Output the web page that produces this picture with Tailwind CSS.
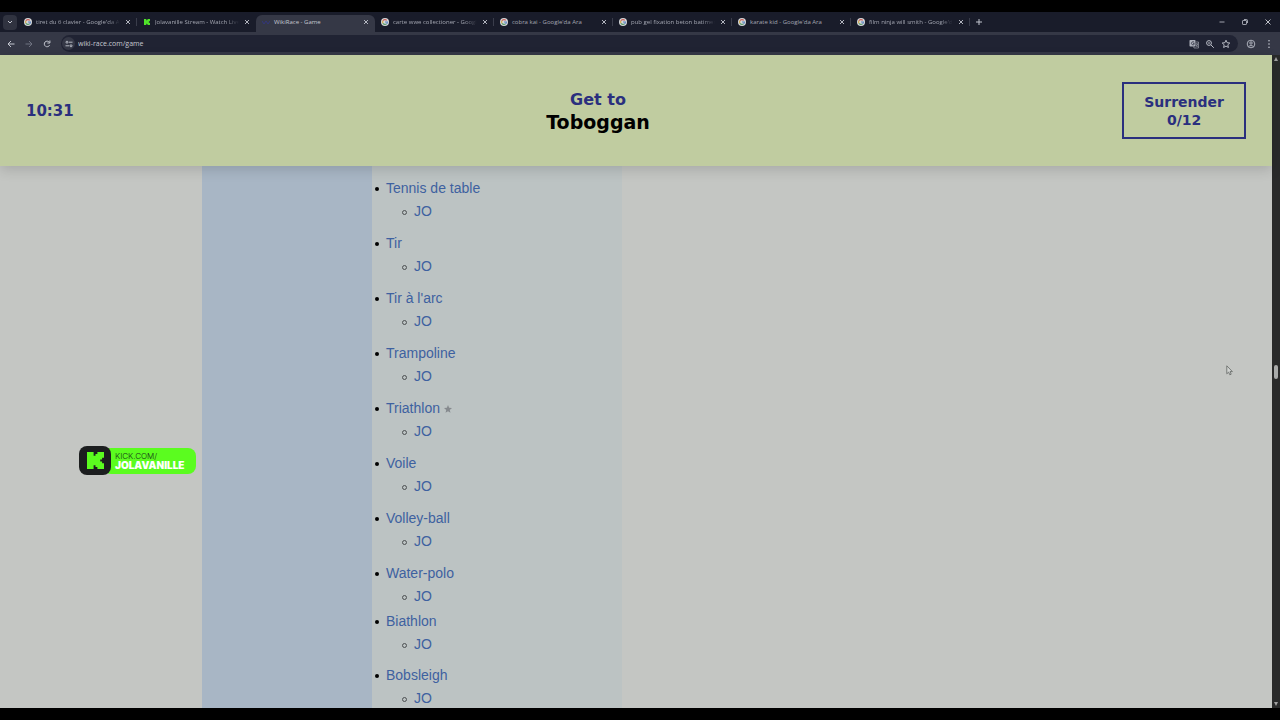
<!DOCTYPE html>
<html lang="en">
<head>
  <meta charset="UTF-8" />
  <meta name="viewport" content="width=device-width, initial-scale=1.0"/>
  <title>WikiRace - Game</title>
  <script src="https://cdn.jsdelivr.net/npm/@tailwindcss/browser@4"></script>
</head>
<body class="h-screen bg-black py-3 flex flex-col overflow-hidden">

  <!-- shared icons -->
  <svg class="hidden">
    <symbol id="google" viewBox="0 0 18 18">
      <circle cx="9" cy="9" r="9" fill="#d5d8da"/>
      <g fill="none" stroke-width="2.6">
        <path d="M13 5.2A5.4 5.4 0 0 0 4.3 6.4" stroke="#c9605a"/>
        <path d="M4.3 6.4a5.4 5.4 0 0 0 0 5.2" stroke="#cfa748"/>
        <path d="M4.3 11.6a5.4 5.4 0 0 0 8.2 1.6" stroke="#5a9c6c"/>
        <path d="M12.5 13.2A5.4 5.4 0 0 0 14.4 9H9" stroke="#5c84bf"/>
      </g>
    </symbol>
    <symbol id="close" viewBox="0 0 8 8">
      <path d="M2 2l4 4M6 2l-4 4" stroke="#c3c6cf" stroke-width="0.9" fill="none"/>
    </symbol>
    <symbol id="kick" viewBox="0 0 18 18">
      <path d="M0 0h7v4h2V2h2V0h7v6h-2v2h-2v2h2v2h2v6h-7v-2H9v-2H7v4H0z"/>
    </symbol>
  </svg>

  <!-- tabs -->
  <div class="h-5 shrink-0 bg-[#191c2a] flex items-stretch text-[6px] text-[#a3a6b1] font-['Open_Sans',sans-serif]">
    <div class="w-[18px] shrink-0 pl-[3px] flex items-center">
      <button aria-label="Search tabs" class="w-[14px] h-[15px] rounded bg-[#303340] flex items-center justify-center">
        <svg class="size-2" viewBox="0 0 8 8" fill="none" stroke="#c3c6cf"><path d="M2 3l2 2 2-2"/></svg>
      </button>
    </div>

    <div class="w-[119px] flex items-center gap-1 pl-1.5 pr-[5px] relative">
      <svg class="size-2 shrink-0"><use href="#google"/></svg>
      <button class="flex-1 min-w-0 text-left whitespace-nowrap mask-r-from-85%">tiret du 6 clavier - Google'da A</button>
      <button aria-label="Close tab"><svg class="size-2"><use href="#close"/></svg></button>
      <span class="absolute right-0 top-1.5 h-2 w-px bg-[#3a3d4b]"></span>
    </div>

    <div class="w-[119px] flex items-center gap-1 pl-1.5 pr-[5px]">
      <svg class="size-2 shrink-0 p-px fill-[#4fe329]"><use href="#kick"/></svg>
      <button class="flex-1 min-w-0 text-left whitespace-nowrap mask-r-from-85%">Jolavanille Stream - Watch Live</button>
      <button aria-label="Close tab"><svg class="size-2"><use href="#close"/></svg></button>
    </div>

    <div class="w-[119px] flex items-center gap-1 pl-1.5 pr-[5px] mt-[3px] pb-[3px] rounded-t-md bg-[#353846] text-[#c6c8d1]">
      <svg class="size-2 shrink-0" viewBox="0 0 8 8" fill="none" stroke="#33367c"><path d="M0 3l2 3 2-3 2 3 2-3"/></svg>
      <button class="flex-1 min-w-0 text-left whitespace-nowrap">WikiRace - Game</button>
      <button aria-label="Close tab"><svg class="size-2"><use href="#close"/></svg></button>
    </div>

    <div class="w-[119px] flex items-center gap-1 pl-1.5 pr-[5px] relative">
      <svg class="size-2 shrink-0"><use href="#google"/></svg>
      <button class="flex-1 min-w-0 text-left whitespace-nowrap mask-r-from-85%">carte wwe collectioner - Googl</button>
      <button aria-label="Close tab"><svg class="size-2"><use href="#close"/></svg></button>
      <span class="absolute right-0 top-1.5 h-2 w-px bg-[#3a3d4b]"></span>
    </div>

    <div class="w-[119px] flex items-center gap-1 pl-1.5 pr-[5px] relative">
      <svg class="size-2 shrink-0"><use href="#google"/></svg>
      <button class="flex-1 min-w-0 text-left whitespace-nowrap">cobra kai - Google'da Ara</button>
      <button aria-label="Close tab"><svg class="size-2"><use href="#close"/></svg></button>
      <span class="absolute right-0 top-1.5 h-2 w-px bg-[#3a3d4b]"></span>
    </div>

    <div class="w-[119px] flex items-center gap-1 pl-1.5 pr-[5px] relative">
      <svg class="size-2 shrink-0"><use href="#google"/></svg>
      <button class="flex-1 min-w-0 text-left whitespace-nowrap mask-r-from-85%">pub gel fixation beton batimen</button>
      <button aria-label="Close tab"><svg class="size-2"><use href="#close"/></svg></button>
      <span class="absolute right-0 top-1.5 h-2 w-px bg-[#3a3d4b]"></span>
    </div>

    <div class="w-[119px] flex items-center gap-1 pl-1.5 pr-[5px] relative">
      <svg class="size-2 shrink-0"><use href="#google"/></svg>
      <button class="flex-1 min-w-0 text-left whitespace-nowrap">karate kid - Google'da Ara</button>
      <button aria-label="Close tab"><svg class="size-2"><use href="#close"/></svg></button>
      <span class="absolute right-0 top-1.5 h-2 w-px bg-[#3a3d4b]"></span>
    </div>

    <div class="w-[119px] flex items-center gap-1 pl-1.5 pr-[5px] relative">
      <svg class="size-2 shrink-0"><use href="#google"/></svg>
      <button class="flex-1 min-w-0 text-left whitespace-nowrap mask-r-from-85%">film ninja will smith - Google'd</button>
      <button aria-label="Close tab"><svg class="size-2"><use href="#close"/></svg></button>
      <span class="absolute right-0 top-1.5 h-2 w-px bg-[#3a3d4b]"></span>
    </div>

    <button aria-label="New tab" class="px-[5px]">
      <svg class="size-2" viewBox="0 0 8 8" stroke="#c3c6cf" fill="none"><path d="M4 1v6M1 4h6"/></svg>
    </button>

    <div class="ml-auto flex items-center gap-[15px] pr-2">
      <button aria-label="Minimize"><svg class="size-2" viewBox="0 0 8 8" stroke="#c3c6cf" fill="none"><path d="M1.5 4h5" stroke-width="0.8"/></svg></button>
      <button aria-label="Restore"><svg class="size-2" viewBox="0 0 8 8" stroke="#c3c6cf" fill="none" stroke-width="0.8"><rect x="1.5" y="2.5" width="4" height="4" rx="0.6"/><path d="M3 1.5h2.5a1 1 0 0 1 1 1V5"/></svg></button>
      <button aria-label="Close"><svg class="size-2" viewBox="0 0 8 8" stroke="#d0d2d9" fill="none"><path d="M1.5 1.5l5 5M6.5 1.5l-5 5" stroke-width="0.9"/></svg></button>
    </div>
  </div>

  <!-- toolbar -->
  <div class="h-[23px] shrink-0 bg-[#353846] flex items-center px-[6px]">
    <div class="flex gap-2">
      <button aria-label="Back"><svg class="size-[10px]" viewBox="0 0 10 10" fill="none" stroke="#c3c6cf"><path d="M8.5 5H2M5 2L2 5l3 3"/></svg></button>
      <button aria-label="Forward"><svg class="size-[10px]" viewBox="0 0 10 10" fill="none" stroke="#6f7280"><path d="M1.5 5H8M5 2l3 3-3 3"/></svg></button>
      <button aria-label="Reload"><svg class="size-[10px]" viewBox="0 0 10 10" fill="none" stroke="#c3c6cf"><path d="M7.6 6.2A2.8 2.8 0 1 1 7.3 3.2"/><path d="M7.9 1.5v2.5H5.4"/></svg></button>
    </div>
    <div class="flex-1 ml-[9px] mr-2 h-[17px] rounded-full bg-[#202333] flex items-center pl-px pr-[7px]">
      <button aria-label="Site information" class="size-[13px] rounded-full bg-[#353846] flex items-center justify-center">
        <svg class="size-2" viewBox="0 0 8 8" fill="none" stroke="#c3c6cf" stroke-width="0.9"><circle cx="2" cy="2.2" r="1"/><path d="M4 2.2h3.5M0.5 5.8H4"/><circle cx="6" cy="5.8" r="1"/></svg>
      </button>
      <input type="text" aria-label="Address" value="wiki-race.com/game" class="flex-1 ml-[3px] pt-px bg-transparent outline-none text-[7px] text-[#c6c8d1] font-['Open_Sans',sans-serif]"/>
      <div class="flex gap-[6px]">
        <button aria-label="Translate"><svg class="size-[10px]" viewBox="0 0 10 10" fill="none"><rect x="0.5" y="1" width="6" height="6.5" rx="0.8" fill="#aeb1bc"/><path d="M5.2 3.2a1.6 1.6 0 1 0 0 2.2V4.4H4" stroke="#202333" stroke-width="0.7"/><path d="M7 3h2.5v6H5L4.5 7.5M6.5 5h2.500M7.800 4.300V5M6.700 8c1-.6 1.600-1.500 1.700-3M7 6l1.700 2" stroke="#aeb1bc" stroke-width="0.6"/></svg></button>
        <button aria-label="Zoom"><svg class="size-[10px]" viewBox="0 0 10 10" fill="none" stroke="#b9bcc6"><circle cx="4" cy="4" r="2.4"/><path d="M5.8 5.8L8.8 8.8M3 4h2"/></svg></button>
        <button aria-label="Bookmark"><svg class="size-[10px]" viewBox="0 0 10 10" fill="none" stroke="#c3c6cf" stroke-width="0.9"><path d="M5 1.2l1.1 2.5 2.7.3-2 1.8.6 2.7L5 7.1 2.6 8.5l.6-2.7-2-1.8 2.7-.3z"/></svg></button>
      </div>
    </div>
    <button aria-label="Profile"><svg class="size-[10px]" viewBox="0 0 10 10" fill="none" stroke="#b9bcc6" stroke-width="0.9"><circle cx="5" cy="5" r="3.8"/><circle cx="5" cy="4" r="1.2"/><path d="M2.5 7.7c1.2-1.5 3.8-1.5 5 0"/></svg></button>
    <button aria-label="Menu" class="ml-2"><svg class="size-[10px]" viewBox="0 0 10 10" fill="#c3c6cf"><circle cx="5" cy="1.8" r="0.8"/><circle cx="5" cy="5" r="0.8"/><circle cx="5" cy="8.2" r="0.8"/></svg></button>
  </div>

  <!-- page -->
  <div class="flex-1 min-h-0 flex bg-[#c4c6c3]">
    <div class="flex-1 min-w-0 flex flex-col">
      <header class="relative z-10 shrink-0 bg-[#c0cca0] px-[26px] py-[27px] flex items-center justify-between font-bold text-[#2a2f7e] shadow-[0_4px_12px_rgba(0,0,0,0.14)] font-['DejaVu_Sans',sans-serif]">
        <div class="pt-px text-[15px]">10:31</div>
        <div class="text-center leading-[22px]">
          <p class="text-[16px]">Get to</p>
          <h1 class="text-[19px] text-black">Toboggan</h1>
        </div>
        <button class="border-2 border-[#2a2f7e] px-5 text-[14px] leading-[18px] h-[57px]">Surrender<br>0/12</button>
      </header>

      <main class="flex-1 min-h-0 overflow-hidden flex pl-[202px] text-[14px] leading-[23px] font-['Liberation_Sans',sans-serif]">
        <div class="w-[170px] shrink-0 bg-[#a8b6c5]"></div>
        <ul class="w-[250px] shrink-0 bg-[#bcc3c3] pt-[11px] pl-[14px] text-[#3e61a0] [&>li]:before:inline-block [&>li]:before:size-1 [&>li]:before:-ml-[11px] [&>li]:before:mr-[7px] [&>li]:before:rounded-full [&>li]:before:bg-black [&>li]:before:align-middle [&_ul>li]:before:inline-block [&_ul>li]:before:size-[5px] [&_ul>li]:before:-ml-3 [&_ul>li]:before:mr-[7px] [&_ul>li]:before:rounded-full [&_ul>li]:before:border [&_ul>li]:before:border-[#4c5052] [&_ul>li]:before:align-middle">
          <li class="mb-[9px]"><a href="#">Tennis de table</a>
            <ul class="pl-7"><li><a href="#">JO</a></li></ul>
          </li>
          <li class="mb-[9px]"><a href="#">Tir</a>
            <ul class="pl-7"><li><a href="#">JO</a></li></ul>
          </li>
          <li class="mb-[9px]"><a href="#">Tir à l'arc</a>
            <ul class="pl-7"><li><a href="#">JO</a></li></ul>
          </li>
          <li class="mb-[9px]"><a href="#">Trampoline</a>
            <ul class="pl-7"><li><a href="#">JO</a></li></ul>
          </li>
          <li class="mb-[9px]"><a href="#">Triathlon</a>
            <svg class="inline size-2 align-baseline" viewBox="0 0 10 10" fill="#868a8e"><path d="M5 0l1.4 3.4 3.6.3-2.8 2.4.9 3.6L5 7.8 1.9 9.7l.9-3.6L0 3.7l3.6-.3z"/></svg>
            <ul class="pl-7"><li><a href="#">JO</a></li></ul>
          </li>
          <li class="mb-[9px]"><a href="#">Voile</a>
            <ul class="pl-7"><li><a href="#">JO</a></li></ul>
          </li>
          <li class="mb-[9px]"><a href="#">Volley-ball</a>
            <ul class="pl-7"><li><a href="#">JO</a></li></ul>
          </li>
          <li class="mb-[2px]"><a href="#">Water-polo</a>
            <ul class="pl-7"><li><a href="#">JO</a></li></ul>
          </li>
          <li class="mb-2"><a href="#">Biathlon</a>
            <ul class="pl-7"><li><a href="#">JO</a></li></ul>
          </li>
          <li><a href="#">Bobsleigh</a>
            <ul class="pl-7"><li><a href="#">JO</a></li></ul>
          </li>
        </ul>
      </main>
    </div>

    <!-- scrollbar -->
    <div class="w-2 shrink-0 bg-[#292a2a] flex flex-col items-center justify-between py-[2px]">
      <svg class="w-1 h-1" viewBox="0 0 4 4" fill="#a0a0a0"><path d="M2 0l2 4H0z"/></svg>
      <div class="w-1 h-[14px] mb-5 rounded-full bg-[#a9abaa]"></div>
      <svg class="w-1 h-1" viewBox="0 0 4 4" fill="#a0a0a0"><path d="M2 4l2-4H0z"/></svg>
    </div>
  </div>

  <!-- stream overlay -->
  <a href="#" class="absolute z-20 left-[79px] top-[446px] flex items-center">
    <span class="relative z-10 w-8 h-[29px] rounded-lg bg-[#1c1e1f] flex items-center justify-center">
      <svg class="size-[17px] fill-[#5bfc1f]"><use href="#kick"/></svg>
    </span>
    <span class="-ml-2 pl-3 pr-2 h-[26px] w-[93px] rounded-lg bg-[#5bfc1f] flex flex-col justify-center font-['Inter',sans-serif] leading-[9px]">
      <span class="text-[8px] font-light text-[#16301a]">KICK.COM/</span>
      <span class="text-[10px] font-black text-white">JOLAVANILLE</span>
    </span>
  </a>

  <!-- mouse pointer -->
  <svg class="absolute z-20 left-[1226px] top-[365px] w-[7px] h-[11px]" viewBox="0 0 7 11" fill="#d3d5d3" stroke="#6c6f6d" stroke-width="0.9"><path d="M0.8 0.8v8l1.8-1.7 1.2 2.7 1.4-.6L4 6.600h2.400z"/></svg>

</body>
</html>
